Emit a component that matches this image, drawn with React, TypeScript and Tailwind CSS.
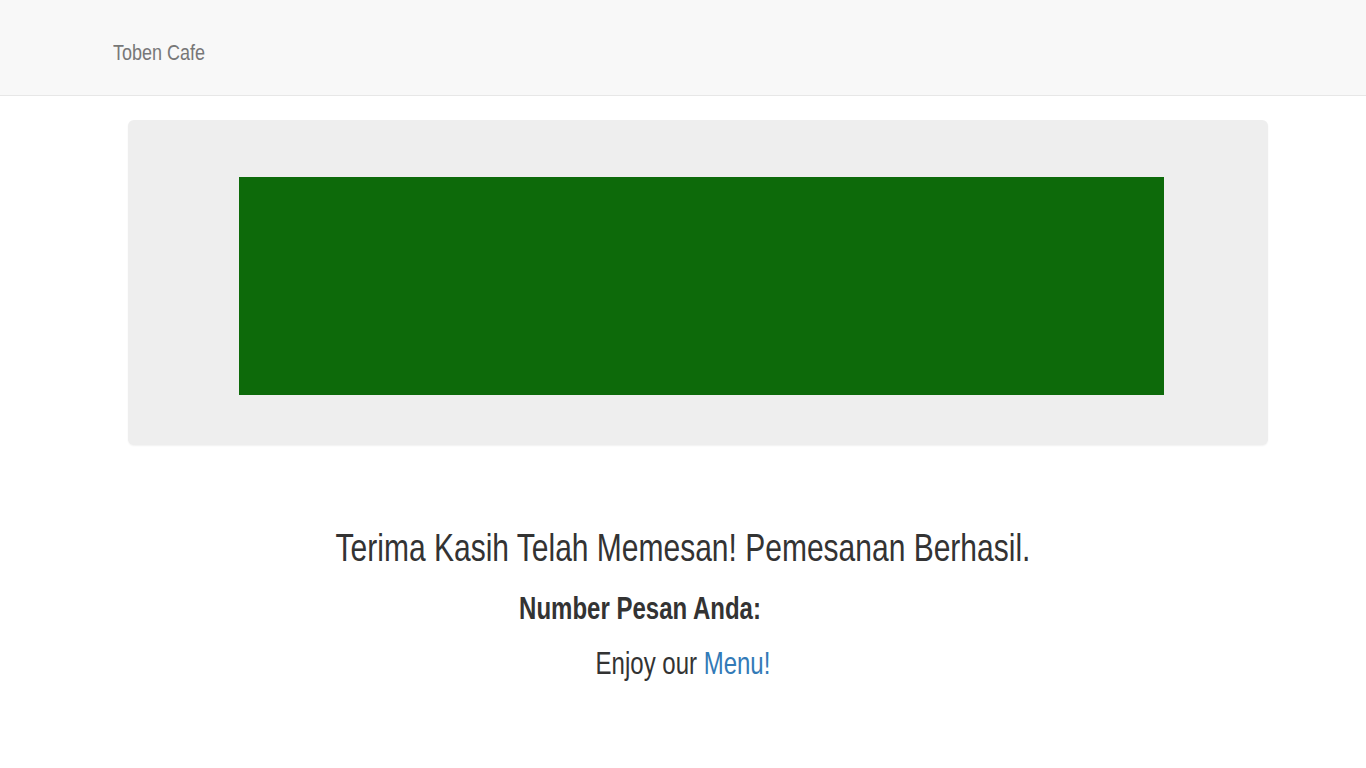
import React from 'react';

const font = { fontFamily: '"Liberation Sans", Arial, sans-serif' };

const App: React.FC = () => {
  return (
    <div className="min-h-screen bg-white text-[#333]" style={font}>
      <nav className="h-[96px] bg-[#f8f8f8] border-b border-[#e7e7e7]">
        <div className="pl-[113px] pt-[42px]">
          <a className="inline-block h-[20px] leading-[20px] text-[18px] text-[#777] scale-y-[1.2]">Toben Cafe</a>
        </div>
      </nav>

      <div className="pl-[128px] pt-[24px]">
        <div className="w-[1140px] h-[325px] bg-[#eeeeee] rounded-[6px] pl-[111px] pt-[57px] shadow-[0_1px_2px_rgba(0,0,0,0.06)]">
          <div className="w-[925px] h-[218px] bg-[#0d6a0a]" />
        </div>
      </div>

      <div className="flex flex-col items-center">
        <h3 className="mt-[83px] h-[40px] leading-[40px] text-[30px] font-normal">
          <span className="inline-block scale-y-[1.27]">Terima Kasih Telah Memesan! Pemesanan Berhasil.</span>
        </h3>
        <h4 className="mt-[25px] h-[32px] leading-[32px] text-[24px] font-bold flex">
          <span className="inline-block scale-y-[1.27]">Number Pesan Anda:</span>
          <span className="inline-block w-[86px]" />
        </h4>
        <p className="mt-[23px] h-[32px] leading-[32px] text-[24px]">
          <span className="inline-block scale-y-[1.27]">
            Enjoy our <a className="text-[#337ab7]">Menu!</a>
          </span>
        </p>
      </div>
    </div>
  );
};

export default App;
